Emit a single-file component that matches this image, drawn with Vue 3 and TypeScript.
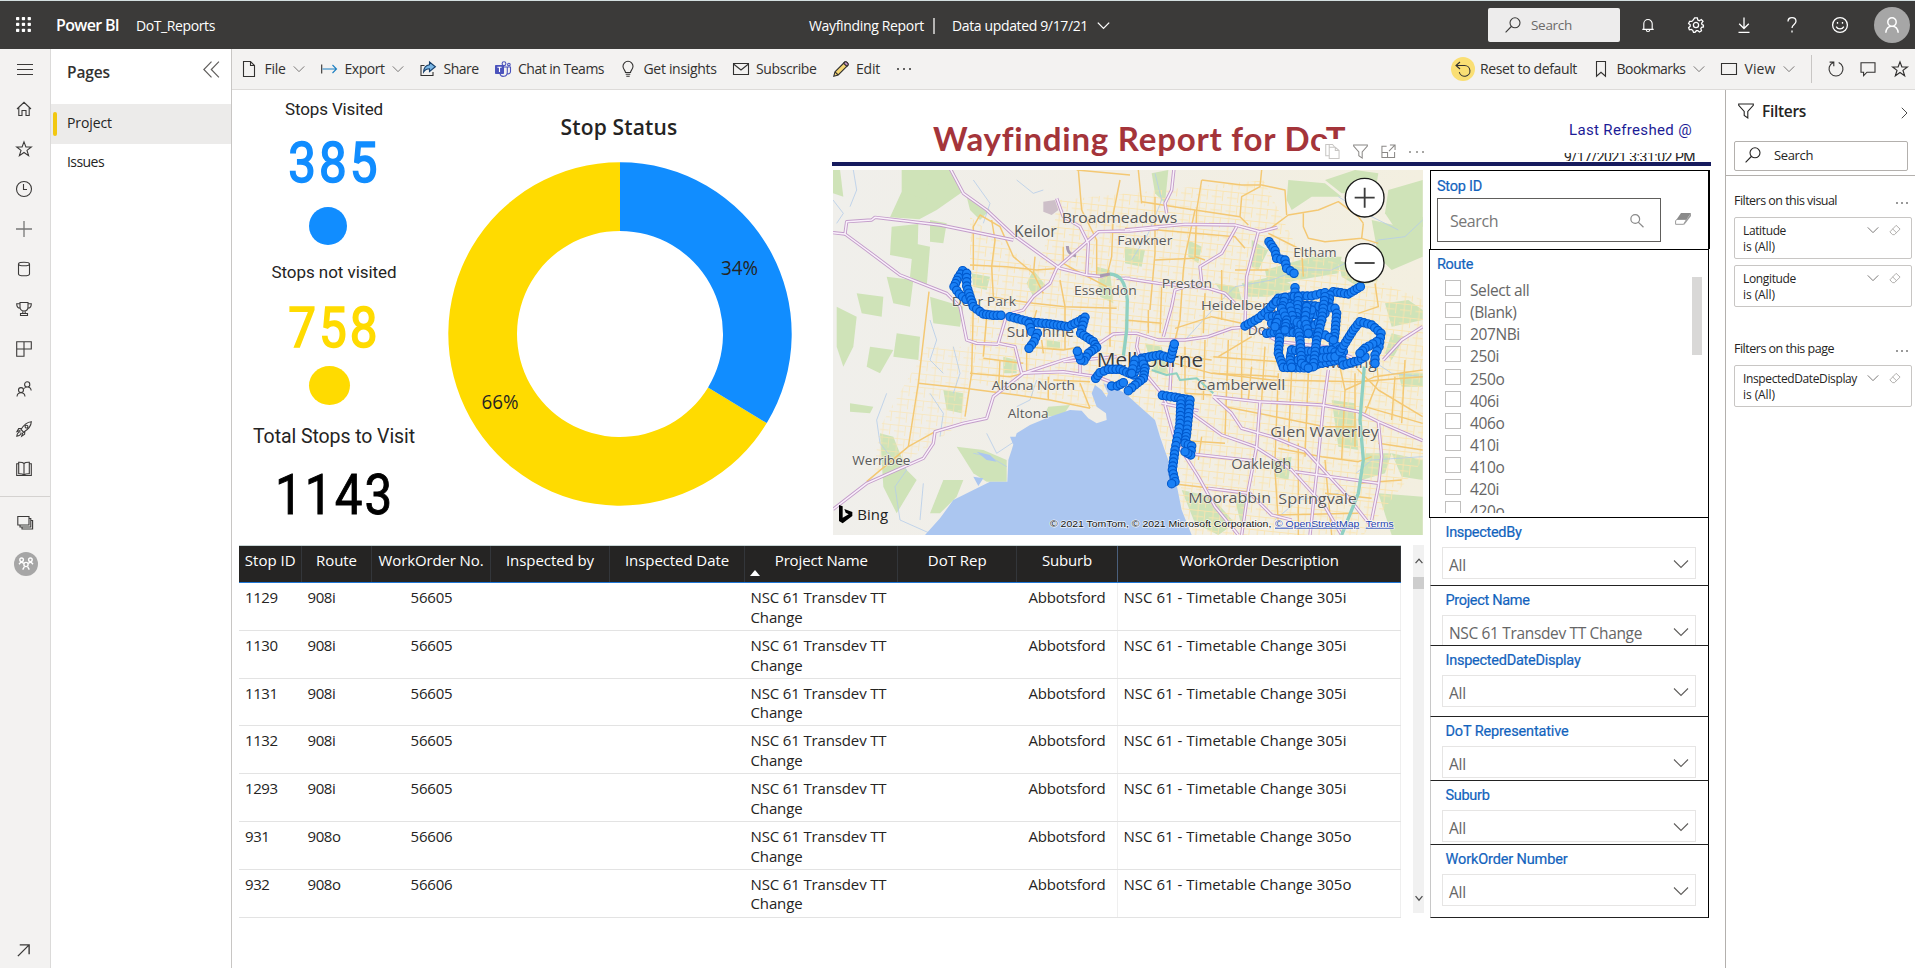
<script setup lang="ts">
import type { Directive } from 'vue'

/* Adjusts tracking so that a label fills the given width in pixels. */
const vFit: Directive<HTMLElement, number> = {
  mounted(el, { value }) {
    const count = (el.textContent ?? '').trim().length
    if (!value || !count) return
    el.style.letterSpacing = '0px'
    const natural = el.getBoundingClientRect().width
    const scale = el.offsetWidth ? natural / el.offsetWidth : 1
    const squeeze = scale < 0.97 ? 0.88 : 1
    el.style.letterSpacing = `${((value - natural) / squeeze / count).toFixed(3)}px`
  },
}

const icons: Record<string, string> = {
  menu: 'M0 2.5H16M0 7.5H16M0 12.5H16',
  home: 'M1 8 8 1.3 15 8M2.8 6.5V14.5H6V9.5H10V14.5H13.2V6.5',
  star: 'M8 .9 9.9 6H15.3L11 9.4 12.6 14.7 8 11.5 3.4 14.7 5 9.4.7 6H6.1Z',
  clock: 'M8 .5A7.5 7.5 0 1 0 8 15.5 7.5 7.5 0 1 0 8 .5M7.5 3V8.5H11',
  plus: 'M0 8H16M8 0V16',
  db: 'M2.5 3C2.5.6 13.5.6 13.5 3S2.5 5.4 2.5 3V13C2.5 15.4 13.5 15.4 13.5 13V3',
  trophy: 'M4 1.5H12V6C12 8.6 10.4 10 8 10S4 8.6 4 6ZM4 2.8H.7C.7 5.7 1.8 7.2 4.3 7.3M12 2.8H15.3C15.3 5.7 14.2 7.2 11.7 7.3M6.8 10V12.3M9.2 10V12.3M4.5 12.5H11.5V14.5H4.5Z',
  apps: 'M.7 .7H15.3V8H.7ZM8 .7V15.3H.7V8',
  people: 'M11.2 .8A2.6 2.6 0 1 0 11.2 6 2.6 2.6 0 1 0 11.2 .8M5 6.6A2.5 2.5 0 1 0 5 11.6 2.5 2.5 0 1 0 5 6.6M1 15.5C1.3 13 2.8 11.8 5 11.8S8.7 13 9 15.5M8 7.5C9 6.4 10 6 11.4 6 13.6 6 14.9 7.2 15.2 9.5',
  rocket: 'M5 8.5C8 3.5 11 1 15.3 .7 15.2 5 12.5 8.2 7.6 11.2ZM5.8 7.3 2.7 7.6 1 10.5 4.4 9.4M8.8 10.4 8.6 13.2 5.7 15.2 6.8 11.6M10.5 4.2A1.4 1.4 0 1 0 10.5 7 1.4 1.4 0 1 0 10.5 4.2M4.5 10.8C2.5 11 1 13 .8 15.3 3 15 4.8 13.8 5.3 11.7',
  book: 'M8 2.5C7 1.5 4.8 1.2 2.7 1.3V12.7C5 12.6 7 13 8 14 9 13 11 12.6 13.3 12.7V1.3C11.2 1.2 9 1.5 8 2.5V14M2.7 2.7H.7V14.5H15.3V2.7H13.3',
  layers: 'M.8 1.5H12V10H.8ZM12 3.5H13.8V12H3V10M13.8 5.5H15.6V14H5V12',
  expand: 'M2 14 14 2M4 2H14V12',
  chevron: 'M1 4.5 8 11.5 15 4.5',
  chevronRight: 'M5 1 12 8 5 15',
  collapse: 'M8 .5 .8 8 8 15.5M15 .5 7.8 8 15 15.5',
  file: 'M2.5 .5H9.5L13.5 4.5V15.5H2.5ZM9.5 .5V4.5H13.5',
  bulb: 'M5.5 11.5C5.5 9.5 3 8.5 3 5.3A5 5 0 0 1 13 5.3C13 8.5 10.5 9.5 10.5 11.5ZM5.7 13.3H10.3M6.3 15.3H9.7',
  mail: 'M.5 2.5H15.5V13.5H.5ZM.5 3 8 9 15.5 3',
  bookmark: 'M3.5 .5H12.5V15.2L8 11.3 3.5 15.2Z',
  view: 'M.5 2.5H15.5V13.5H.5Z',
  refresh: 'M5.3 1.5A7 7 0 1 0 10.7 1.5M5.8 5.2V1.1H1.6',
  reset: 'M5 1 1 4.5 5 8M1 4.5H9.5A5.4 5.4 0 1 1 4.3 11.2',
  comment: 'M1 1.8H15V11.2H7L3.6 14.6V11.2H1Z',
  search: 'M10 .8A5 5 0 1 0 10 10.8 5 5 0 1 0 10 .8M6.3 9.5 .6 15.3',
  searchRight: 'M6 .8A5 5 0 1 0 6 10.8 5 5 0 1 0 6 .8M9.7 9.5 15.4 15.2',
  bell: 'M1.5 12.5H14.5M3.2 12.5V6A4.8 4.8 0 0 1 12.8 6V12.5M6 12.8C6 15.6 10 15.6 10 12.8',
  gear: 'M6.7 .8H9.3L9.8 3 11.4 3.7 13.3 2.5 15 4.4 13.6 6.2 14 7.5 15.4 8.2V10L13.6 10.4 12.8 11.7 13.5 13.7 11.5 15 9.8 13.7H8.4L7 15.3H5.5L4.7 13.3 3.4 12.4 1.4 12.8 .6 10.7 2.2 9.2V7.8L.6 6.5 1.6 4.3 3.8 4.4 4.9 3.4ZM8 5.4A2.6 2.6 0 1 0 8 10.6 2.6 2.6 0 1 0 8 5.4',
  download: 'M8 .5V11.5M3.2 6.7 8 11.5 12.8 6.7M2.5 15.3H13.5',
  help: 'M4 4.5C4 2 5.7.7 8 .7S12 2 12 4.3C12 7.4 8 7.5 8 11M8 13.6V15.5',
  smile: 'M8 .6A7.4 7.4 0 1 0 8 15.4 7.4 7.4 0 1 0 8 .6M4.2 9.6C5.7 12.6 10.3 12.6 11.8 9.6M5.5 5V6.8M10.5 5V6.8',
  person: 'M8 .8A4.2 4.2 0 1 0 8 9.2 4.2 4.2 0 1 0 8 .8M1.8 15.8C2.2 11.5 4.6 9.2 8 9.2S13.8 11.5 14.2 15.8',
  funnel: 'M.7 1H15.3V2.3L9.8 8.5V15L6.2 12.5V8.5L.7 2.3Z',
  copy: 'M4.5 3.5V.5H.8V12.5H4.5M4.5 3.5H11L15 7V15.5H4.5ZM11 3.5V7H15M4.5 .5H8L10.5 3.5',
  focus: 'M6 2.5H1V14.5H14.5V8.5M1 9H7V14.5M9.5 1H15V6.5M15 1 8.5 7.5',
  eraser: 'M9.5 1.8 14.8 6.8 7.2 14.2H4.7L1.2 10.5ZM4.8 6.5 10 11.6',
}

interface ToolItem { icon: string; label: string; width: number; menu?: boolean }
const leftTools: ToolItem[] = [
  { icon: 'file', label: 'File', width: 21, menu: true },
  { icon: 'export', label: 'Export', width: 40, menu: true },
  { icon: 'share', label: 'Share', width: 35 },
  { icon: 'teams', label: 'Chat in Teams', width: 86 },
  { icon: 'bulb', label: 'Get insights', width: 73 },
  { icon: 'mail', label: 'Subscribe', width: 60.5 },
  { icon: 'pencil', label: 'Edit', width: 24 },
]
const rightTools: ToolItem[] = [
  { icon: 'bookmark', label: 'Bookmarks', width: 69, menu: true },
  { icon: 'view', label: 'View', width: 31, menu: true },
]
const railIcons = ['home', 'star', 'clock', 'plus', 'db', 'trophy', 'apps', 'people', 'rocket', 'book']
const headerIcons = ['bell', 'gear', 'download', 'help', 'smile']

const routes = ['Select all', '(Blank)', '207NBi', '250i', '250o', '406i', '406o', '410i', '410o', '420i', '420o']

interface Slicer { label: string; labelWidth: number; value: string; valueWidth: number; height: number }
const slicers: Slicer[] = [
  { label: 'InspectedBy', labelWidth: 76, value: 'All', valueWidth: 17, height: 68 },
  { label: 'Project Name', labelWidth: 84, value: 'NSC 61 Transdev TT Change', valueWidth: 193, height: 60 },
  { label: 'InspectedDateDisplay', labelWidth: 135, value: 'All', valueWidth: 17, height: 71 },
  { label: 'DoT Representative', labelWidth: 123, value: 'All', valueWidth: 17, height: 64 },
  { label: 'Suburb', labelWidth: 44, value: 'All', valueWidth: 17, height: 64 },
  { label: 'WorkOrder Number', labelWidth: 122, value: 'All', valueWidth: 17, height: 73 },
]

const columns = [
  { title: 'Stop ID', width: 51 },
  { title: 'Route', width: 41 },
  { title: 'WorkOrder No.', width: 105 },
  { title: 'Inspected by', width: 88 },
  { title: 'Inspected Date', width: 104 },
  { title: 'Project Name', width: 93 },
  { title: 'DoT Rep', width: 59 },
  { title: 'Suburb', width: 50 },
  { title: 'WorkOrder Description', width: 159 },
]
const rows = [
  ['1129', '908i', '56605', '305i'],
  ['1130', '908i', '56605', '305i'],
  ['1131', '908i', '56605', '305i'],
  ['1132', '908i', '56605', '305i'],
  ['1293', '908i', '56605', '305i'],
  ['931', '908o', '56606', '305o'],
  ['932', '908o', '56606', '305o'],
]

const filterGroups = [
  { title: 'Filters on this visual', width: 103, cards: [{ name: 'Latitude', width: 43 }, { name: 'Longitude', width: 53 }] },
  { title: 'Filters on this page', width: 100, cards: [{ name: 'InspectedDateDisplay', width: 114 }] },
]

/* Donut: 385 visited out of 1143. */
const visitedAngle = (385 / 1143) * Math.PI * 2
function arc(from: number, to: number, outer: number, inner: number): string {
  const p = (a: number, r: number) => `${(Math.sin(a) * r).toFixed(2)} ${(-Math.cos(a) * r).toFixed(2)}`
  const large = to - from > Math.PI ? 1 : 0
  return `M${p(from, outer)}A${outer} ${outer} 0 ${large} 1 ${p(to, outer)}L${p(to, inner)}A${inner} ${inner} 0 ${large} 0 ${p(from, inner)}Z`
}
const visitedPath = arc(0, visitedAngle, 171.7, 103)
const remainingPath = arc(visitedAngle, Math.PI * 2, 171.7, 103)

/* Map drawing units are a third of a pixel. East-side features are shifted by 885. */
const westMotorways = [
  '360,25 400,100 470,150 550,225 640,290 690,325 770,345 820,350',
  '9,218 45,222 50,185 125,180 135,172 330,195 550,240',
  '45,222 110,270 210,345 350,400 390,440 410,540 440,550 505,553',
  '985,205 900,213 805,215 760,255 680,325 660,370 610,410 580,450 530,465 505,550 555,560 575,640',
  '9,1048 110,970 200,930 280,895 310,850 315,815 400,790 470,775 490,710 580,640 700,600 760,585 800,555 850,522 885,520',
  '575,640 700,635 800,650 840,665', '700,605 860,590', '750,600 750,640', '680,115 700,170 750,200 775,250 770,345',
  '860,355 900,355',
]
const eastMotorways = [
  '0,210 100,200 180,193 330,195 405,215 457,202', '147,25 140,90 120,130 125,160',
  '335,200 290,280 225,320 230,365 150,390 140,440 115,530', '400,215 365,350 360,490',
  '0,355 100,370 250,385 300,400 330,430', '0,520 35,520 100,540 180,540 250,530 320,505 380,500 460,545 600,560 700,600',
  '40,530 35,560 60,640 110,700 125,735', '775,600 830,540 893,500', '265,710 400,725 590,735 700,755 760,785 893,842',
  '265,710 320,760 350,805 440,830 540,870 660,1000 740,1100', '180,745 290,825 390,860 500,930 600,1040 650,1125',
  '120,735 150,840 220,950 270,1040 340,1125', '405,725 395,860 370,990 350,1125', '610,630 595,740 575,940 555,1125',
  '760,785 770,890 760,980 740,1080', '210,883 390,903', '510,935 760,970', '110,730 220,752', '140,590 135,690',
  '370,995 440,1065 500,1080', '250,985 370,1000',
]
const westRoads = [
  '420,315 530,320 620,330 690,325', '430,330 430,200 450,165 510,200 550,290 610,340 640,400', '485,180 495,240 485,320 490,410',
  '430,440 425,640 405,770', '297,395 265,670 235,860', '265,670 405,685 560,705 660,720 780,745', '110,965 235,860 315,815',
  '420,640 540,650 580,640', '470,470 460,590', '460,595 580,610', '590,560 590,640', '635,540 640,580', '480,410 610,430 705,440 860,445',
  '690,360 705,440 705,570', '745,30 755,150 800,240 800,350', '870,60 850,160 845,290 830,350', '740,30 900,45',
  '585,560 700,570 750,560', '750,670 780,745', '655,650 655,720', '510,600 505,700', '620,450 600,520', '610,345 615,290',
  '700,260 700,310 735,330 830,380', '670,660 780,665', '840,420 840,560',
]
const eastRoads = [
  '40,30 50,130', '90,110 90,280 75,450', '210,150 180,290 175,330', '230,60 215,150 210,290 240,300', '230,60 350,75 410,75 480,90 485,165',
  '410,30 405,80 350,110 345,170', '50,125 210,150 345,170 370,195', '430,210 490,165 580,150 640,125 700,170 715,190',
  '535,160 535,200 550,235 600,245 710,235 715,190', '710,235 760,250', '0,205 100,210 330,230 360,265', '330,330 430,330', '430,220 530,270 535,350',
  '70,450 70,520', '110,380 105,520', '175,330 165,480 150,540', '0,480 110,490', '150,505 260,470 350,490', '240,400 235,520', '290,330 290,480',
  '150,610 260,640 460,650', '180,560 180,700', '240,540 235,720', '310,540 300,830', '350,500 350,720', '265,590 460,605', '280,590 380,530',
  '265,640 440,660 700,665 893,650', '420,560 410,720', '460,640 450,900', '500,630 490,860', '550,640 540,890', '640,600 660,690 650,900',
  '690,640 690,860', '700,460 760,440 750,370', '660,590 760,690 893,770', '750,560 760,660 720,760', '720,740 893,790', '300,740 600,800 690,800',
  '460,865 590,890 700,905 740,890', '450,930 460,1090', '130,970 260,985 370,995', '520,850 520,1125', '600,900 620,1125', '700,970 830,960',
  '810,650 800,780', '450,1065 700,1060', '840,600 830,790', '200,760 190,860', '150,840 300,850', '230,830 220,900', '760,850 893,870', '90,300 210,295',
  '380,620 370,720', '100,580 260,600', '180,700 260,705', '600,1000 740,1015', '660,690 750,650 893,630',
]
const water = 'M285 1125 330 1075 370 1020 430 990 480 965 532 965 535 900 545 870 560 820 600 795 660 770 720 750 755 752 775 775 800 790 830 780 828 760 800 740 785 700 795 675 815 690 830 712 834 700 820 670 850 680 885 700 935 745 975 780 990 830 1020 915 1042 985 1055 1050 1085 1125Z'
const westParks = [
  '215,28 368,28 398,95 320,150 268,178 180,172 215,95', '185,200 265,192 262,300 180,285', '225,28 300,28 290,120 220,95',
  '80,400 160,410 155,470 95,460', '20,440 80,470 70,560 40,620 20,560', '300,180 350,190 340,250 300,245', '200,520 270,530 265,600 190,590',
  '120,560 190,570 150,640 110,620', '340,690 400,700 395,760 350,750', '170,350 250,360 240,440 190,430', '300,410 400,440 390,500 310,490',
  '380,860 460,870 530,900 530,965 470,965 430,940', '150,820 190,830 230,930 260,960 200,1060 160,980', '340,960 400,960 380,1010 330,1060 300,1060',
  '610,330 650,380 610,410 590,370', '520,590 560,600 560,640 520,640', '655,740 720,735 700,765 640,770', '410,110 480,150 450,180 420,150',
  '800,320 840,330 850,430 810,410', '650,540 690,545 690,570 650,565', '60,730 130,740 120,760 60,755', '9,28 30,28 40,110 9,100',
  '250,250 300,260 290,380 240,350', '425,340 480,350 470,390 430,380',
]
const eastParks = [
  '490,60 600,70 650,110 560,110 500,150 485,120', '600,60 690,30 760,40 750,100 650,100', '790,90 893,60 893,200 820,220 780,160',
  '420,330 560,290 650,290 640,340 520,360 430,380', '740,180 830,200 893,170 893,290 800,330 760,290', '350,370 440,350 520,380 430,410 370,410',
  '80,40 130,30 120,130 90,100', '190,240 230,260 220,310 190,290', '380,240 430,270 400,330 380,320', '640,300 720,330 760,360 700,380 650,350',
  '720,880 800,880 780,940 710,960', '760,1000 893,1010 893,1125 800,1125', '60,550 110,560 130,640 90,640', '800,880 893,900 893,960 830,950',
  '620,720 690,730 700,870 640,860', '440,900 500,890 490,960 450,950', '820,640 893,640 893,680 830,680', '170,990 260,1010 330,1090 280,1125 210,1090',
  '780,430 850,420 893,450 893,480 800,500', '0,260 60,270 50,320 0,310', '330,1020 370,1020 350,1100', '800,520 840,530 800,600 780,580', '270,370 340,380 350,420 300,410',
]
const creeks = [
  '9,120 40,160 20,190', '70,30 80,90 60,140', '300,480 320,540 300,600 340,640', '300,700 340,760 330,830', '370,560 390,640 370,700',
  '170,700 140,780 150,850 190,900 230,930 195,980 210,1080 300,1120', '430,60 480,130 460,190', '560,60 610,100 640,90', '280,970 270,1080',
  '470,820 500,880 560,840', '430,880 480,890 530,920', '620,660 600,720 560,740',
]
const eastCreeks = [
  '893,180 840,230 760,240 700,290 620,330 520,330 440,360 330,380 290,420 180,540', '90,40 110,120 70,220 20,300', '893,650 800,640 740,600',
  '693,940 740,900 893,890', '450,1080 520,1020 640,1000', '640,110 720,160 820,210',
]

interface MapLabel { text: string; x: number; y: number; w: number; size: number; strong?: boolean }
const mapLabels: MapLabel[] = [
  { text: 'Keilor', x: 552, y: 232, w: 128, size: 47 },
  { text: 'Broadmeadows', x: 695, y: 189, w: 347, size: 45 },
  { text: 'Fawkner', x: 862, y: 255, w: 165, size: 40 },
  { text: 'Deer Park', x: 365, y: 438, w: 193, size: 40 },
  { text: 'Essendon', x: 732, y: 405, w: 188, size: 39 },
  { text: 'Sunshine', x: 530, y: 530, w: 202, size: 44 },
  { text: 'Melbourne', x: 800, y: 622, w: 320, size: 59, strong: true },
  { text: 'Altona North', x: 485, y: 690, w: 250, size: 39 },
  { text: 'Altona', x: 533, y: 773, w: 123, size: 39 },
  { text: 'Werribee', x: 67, y: 914, w: 174, size: 39 },
  { text: 'Preston', x: 995, y: 384, w: 151, size: 39 },
  { text: 'Eltham', x: 1390, y: 290, w: 130, size: 38 },
  { text: 'Heidelberg', x: 1113, y: 451, w: 225, size: 39 },
  { text: 'Doncaster', x: 1253, y: 525, w: 200, size: 41 },
  { text: 'Nunawading', x: 1365, y: 624, w: 275, size: 44 },
  { text: 'Camberwell', x: 1100, y: 691, w: 266, size: 44 },
  { text: 'Glen Waverley', x: 1321, y: 831, w: 325, size: 46 },
  { text: 'Oakleigh', x: 1204, y: 927, w: 180, size: 41 },
  { text: 'Moorabbin', x: 1075, y: 1028, w: 248, size: 46 },
  { text: 'Springvale', x: 1345, y: 1033, w: 236, size: 46 },
]

type Line = [number, number][]
const westStops: Line[] = [
  [[398, 332], [385, 352], [372, 380], [388, 402], [408, 418]],
  [[410, 340], [410, 378], [420, 410], [430, 440], [460, 462], [490, 466], [513, 466]],
  [[540, 470], [600, 486], [660, 492], [715, 500], [745, 485], [765, 472], [752, 520], [790, 545], [800, 562], [775, 580], [762, 602], [752, 600], [742, 574]],
  [[597, 490], [605, 515], [622, 520], [612, 545], [597, 565]],
  [[797, 655], [810, 638], [835, 628], [870, 628], [910, 645], [935, 595], [990, 585], [1022, 595], [1033, 552]],
  [[845, 678], [862, 678], [880, 668]],
  [[935, 600], [945, 625], [940, 655], [915, 675], [895, 692]],
  [[915, 600], [905, 640]],
]
const eastStops: Line[] = [
  [[432, 245], [450, 272], [455, 295], [480, 300], [485, 325], [507, 340]],
  [[510, 383], [510, 410]],
  [[625, 395], [670, 402], [706, 380]],
  [[360, 498], [400, 475], [430, 450], [460, 415], [520, 408], [560, 408], [600, 398], [615, 405], [610, 440]],
  [[455, 425], [520, 435], [570, 438], [630, 445], [635, 460], [630, 520], [625, 550], [655, 575]],
  [[430, 470], [480, 465], [560, 465], [600, 460]],
  [[440, 490], [500, 490], [570, 495], [590, 480]],
  [[425, 520], [470, 515], [540, 520], [600, 525], [625, 540]],
  [[465, 520], [460, 580], [475, 622], [550, 624], [580, 612], [640, 600]],
  [[500, 570], [495, 600], [500, 622]],
  [[500, 570], [560, 575], [620, 570], [650, 590], [655, 615], [700, 602], [720, 590]],
  [[520, 600], [580, 595], [630, 590]],
  [[600, 410], [590, 480], [575, 540], [565, 620]],
  [[520, 410], [515, 470], [525, 540], [530, 610], [550, 624]],
  [[480, 412], [470, 450], [450, 500]],
  [[495, 440], [505, 480], [540, 500], [560, 450]],
  [[470, 445], [485, 480], [480, 510]],
  [[545, 440], [540, 480], [550, 520]],
  [[645, 575], [668, 537], [685, 510], [705, 485], [740, 495], [768, 520], [762, 560], [750, 585], [750, 610]],
  [[755, 545], [720, 565], [705, 580]],
  [[112, 706], [150, 712], [195, 720], [190, 770], [185, 820], [180, 850], [200, 858], [197, 885], [180, 875]],
  [[168, 720], [165, 790], [158, 830], [150, 870], [142, 930], [150, 965], [140, 971]],
]
function sample(line: Line, step: number): Line {
  const out: Line = [line[0]]
  for (let i = 1; i < line.length; i++) {
    const [ax, ay] = line[i - 1]
    const [bx, by] = line[i]
    const n = Math.max(1, Math.round(Math.hypot(bx - ax, by - ay) / step))
    for (let k = 1; k <= n; k++) out.push([ax + ((bx - ax) * k) / n, ay + ((by - ay) * k) / n])
  }
  return out
}
const stops: Line = [
  ...westStops.flatMap((l) => sample(l, 12)),
  ...eastStops.flatMap((l) => sample(l.map(([x, y]) => [x + 885, y] as [number, number]), 12)),
]
</script>

<template>
  <div class="app">
    <header class="topbar">
      <div class="brand">
        <svg class="waffle" viewBox="0 0 16 16">
          <template v-for="r in 3" :key="r">
            <rect v-for="c in 3" :key="c" :x="(c - 1) * 6" :y="(r - 1) * 6" width="3.4" height="3.4" rx=".8" />
          </template>
        </svg>
        <strong v-fit="63">Power BI</strong>
        <span v-fit="79" class="workspace">DoT_Reports</span>
      </div>
      <div class="doc">
        <span v-fit="115">Wayfinding Report</span>
        <i class="bar"></i>
        <span v-fit="136">Data updated 9/17/21</span>
        <svg class="ic chev" viewBox="0 0 16 16"><path :d="icons.chevron" /></svg>
      </div>
      <div class="tools">
        <div class="top-search">
          <svg class="ic" viewBox="0 0 16 16"><path :d="icons.search" /></svg>
          <span v-fit="41">Search</span>
        </div>
        <span v-for="name in headerIcons" :key="name" class="top-icon">
          <svg class="ic" viewBox="0 0 16 16"><path :d="icons[name]" /></svg>
        </span>
        <span class="avatar"><svg class="ic" viewBox="0 0 16 16"><path :d="icons.person" /></svg></span>
      </div>
    </header>

    <div class="body">
      <nav class="rail">
        <span class="rail-item"><svg class="ic" viewBox="0 0 16 16"><path :d="icons.menu" /></svg></span>
        <span v-for="name in railIcons" :key="name" class="rail-item">
          <svg class="ic" viewBox="0 0 16 16"><path :d="icons[name]" /></svg>
        </span>
        <span class="rail-item layers"><svg class="ic" viewBox="0 0 16 16"><path :d="icons.layers" /></svg></span>
        <span class="rail-item">
          <svg class="group" viewBox="0 0 24 24">
            <circle cx="12" cy="12" r="12" fill="#a6a6a6" />
            <g fill="none" stroke="#fff" stroke-width="1.4">
              <circle cx="7.6" cy="7.8" r="1.8" /><circle cx="16.4" cy="7.8" r="1.8" /><circle cx="12" cy="12.5" r="2.1" />
              <path d="M5 12.3 7 10 10 11.3M19 12.3 17 10 14 11.3M8.7 17.6 10.3 14.8M15.3 17.6 13.7 14.8" />
            </g>
          </svg>
        </span>
        <span class="rail-item last"><svg class="ic" viewBox="0 0 16 16"><path :d="icons.expand" /></svg></span>
      </nav>

      <aside class="pages">
        <div class="pages-head">
          <span v-fit="43">Pages</span>
          <svg class="ic" viewBox="0 0 16 16"><path :d="icons.collapse" /></svg>
        </div>
        <div class="page active"><span v-fit="45">Project</span></div>
        <div class="page"><span v-fit="37">Issues</span></div>
      </aside>

      <div class="main">
        <div class="toolbar">
          <div v-for="t in leftTools" :key="t.label" class="tool">
            <svg v-if="t.icon === 'export'" class="ic" viewBox="0 0 16 16">
              <path d="M.7 3.5V12.5" /><path d="M1.5 8H15.5M11.5 4 15.5 8 11.5 12" stroke="#1b7fc1" />
            </svg>
            <svg v-else-if="t.icon === 'share'" class="ic" viewBox="0 0 16 16">
              <path d="M4.5 4.5H1V14.5H13V11" />
              <path d="M9.5 1 15.4 5.8 9.5 10.5V7.8C6.5 7.8 5 8.8 3.6 11 3.8 7 6 4.2 9.5 3.8Z" fill="#7ab7e6" stroke="#17406b" />
            </svg>
            <svg v-else-if="t.icon === 'teams'" class="ic" viewBox="0 0 16 16">
              <circle cx="9" cy="2.7" r="1.9" stroke="#4b53bc" /><circle cx="13.9" cy="3.6" r="1.3" stroke="#4b53bc" />
              <path d="M9 6H15.5V10.5C15.5 12.5 13.5 13.3 12.4 12.7M12.3 6V11C12.3 16.5 5.5 16.5 5 12.5" stroke="#4b53bc" />
              <rect x="0" y="4" width="9" height="9" rx=".8" fill="#4b53bc" stroke="none" />
              <path d="M2.4 6.3H6.6M4.5 6.3V11" stroke="#fff" />
            </svg>
            <svg v-else-if="t.icon === 'pencil'" class="ic" viewBox="0 0 16 16">
              <path d="M.8 15.2 2 10.8 11.8 1C13.2 0 16 2.8 15 4.2L5.2 14Z" fill="#f7d774" />
              <path d="M10.6 2.2 11.8 1C13.2 0 16 2.8 15 4.2L13.8 5.4Z" fill="#c08fc0" />
              <path d="M2 10.8 5.2 14" />
            </svg>
            <svg v-else class="ic" viewBox="0 0 16 16"><path :d="icons[t.icon]" /></svg>
            <span v-fit="t.width">{{ t.label }}</span>
            <svg v-if="t.menu" class="ic chev" viewBox="0 0 16 16"><path :d="icons.chevron" /></svg>
          </div>
          <span class="dots"><i></i><i></i><i></i></span>
          <div class="tool reset">
            <span class="halo"><svg class="ic" viewBox="0 0 16 16"><path :d="icons.reset" /></svg></span>
            <span v-fit="97">Reset to default</span>
          </div>
          <div v-for="t in rightTools" :key="t.label" class="tool">
            <svg class="ic" viewBox="0 0 16 16"><path :d="icons[t.icon]" /></svg>
            <span v-fit="t.width">{{ t.label }}</span>
            <svg class="ic chev" viewBox="0 0 16 16"><path :d="icons.chevron" /></svg>
          </div>
          <i class="sep"></i>
          <svg class="ic lone" viewBox="0 0 16 16"><path :d="icons.refresh" /></svg>
          <svg class="ic lone" viewBox="0 0 16 16"><path :d="icons.comment" /></svg>
          <svg class="ic lone" viewBox="0 0 16 16"><path :d="icons.star" /></svg>
        </div>

        <div class="content">
          <section class="report">
            <div class="kpis">
              <div class="kpi-label k1"><span v-fit="98">Stops Visited</span></div>
              <div class="kpi-num n1"><span v-fit="94">385</span></div>
              <div class="kpi-dot d1"><i></i></div>
              <div class="kpi-label k2"><span v-fit="125">Stops not visited</span></div>
              <div class="kpi-num n2"><span v-fit="94">758</span></div>
              <div class="kpi-dot d2"><i></i></div>
              <div class="kpi-label k3"><span v-fit="162">Total Stops to Visit</span></div>
              <div class="kpi-num n3"><span v-fit="121">1143</span></div>
            </div>

            <div class="donut">
              <h2><span v-fit="117">Stop Status</span></h2>
              <svg viewBox="-172 -172 344 344" width="344" height="344">
                <path :d="remainingPath" fill="#ffdb00" /><path :d="visitedPath" fill="#118dff" />
                <text x="101" y="-59" textLength="37" lengthAdjust="spacingAndGlyphs">34%</text>
                <text x="-138.5" y="75" textLength="37" lengthAdjust="spacingAndGlyphs">66%</text>
              </svg>
            </div>

            <div class="title-row">
              <h1><span v-fit="413">Wayfinding Report for DoT</span></h1>
              <div class="refreshed">
                <span v-fit="123" class="ref-label">Last Refreshed @</span>
                <div class="ref-time"><span v-fit="131">9/17/2021 3:31:02 PM</span></div>
              </div>
              <div class="visual-tools">
                <svg class="ic faint" viewBox="0 0 16 16"><path :d="icons.copy" /></svg>
                <svg class="ic" viewBox="0 0 16 16"><path :d="icons.funnel" /></svg>
                <svg class="ic" viewBox="0 0 16 16"><path :d="icons.focus" /></svg>
                <span class="dots"><i></i><i></i><i></i></span>
              </div>
            </div>

            <div class="map">
              <svg viewBox="9 30 1770 1095" width="590" height="365">
                <defs>
                  <pattern id="streets" width="46" height="40" patternUnits="userSpaceOnUse" patternTransform="rotate(6)">
                    <path d="M0 10H46M12 0V40M0 28H30M33 10V40" fill="none" stroke="#fbe3ad" stroke-width="2.6" />
                  </pattern>
                  <linearGradient id="land" x1="0" x2="1">
                    <stop offset="0" stop-color="#f0efeb" /><stop offset=".45" stop-color="#f1eee6" /><stop offset="1" stop-color="#f3efe0" />
                  </linearGradient>
                </defs>
                <rect x="9" y="30" width="1770" height="1095" fill="url(#land)" />
                <g fill="#cfe3b8">
                  <polygon v-for="p in westParks" :key="p" :points="p" />
                  <polygon v-for="p in eastParks" :key="p" :points="p" transform="translate(885 0)" />
                </g>
                <polygon points="420,170 620,330 690,120 1300,60 1400,260 1779,420 1779,900 1600,1125 1080,1125 980,780 780,740 540,700 420,660" fill="url(#streets)" />
                <polygon points="290,560 420,560 410,780 250,890 130,940 150,800" fill="url(#streets)" opacity=".7" />
                <g class="creek">
                  <polyline v-for="p in creeks" :key="p" :points="p" />
                  <polyline v-for="p in eastCreeks" :key="p" :points="p" transform="translate(885 0)" />
                </g>
                <path :d="water" fill="#abc6f0" />
                <path d="M440 875 480 885 500 905 470 900ZM430 950 460 955 445 978ZM540 830 560 830 550 855Z" fill="#abc6f0" />
                <g class="road">
                  <polyline v-for="p in westRoads" :key="p" :points="p" />
                  <polyline v-for="p in eastRoads" :key="p" :points="p" transform="translate(885 0)" />
                </g>
                <path d="M640 125 675 120 685 150 665 165 640 155Z" fill="#cdbfc8" />
                <path d="M712 258C712 280 725 285 738 288" class="tunnel" />
                <g class="mway">
                  <polyline v-for="p in westMotorways" :key="p" :points="p" />
                  <polyline v-for="p in eastMotorways" :key="p" :points="p" transform="translate(885 0)" />
                </g>
                <g class="mway-in">
                  <polyline v-for="p in westMotorways" :key="p" :points="p" />
                  <polyline v-for="p in eastMotorways" :key="p" :points="p" transform="translate(885 0)" />
                </g>
                <path class="tunnel" d="M810 348 840 342" />
                <g class="toll">
                  <path d="M840 342C870 345 885 360 892 420L890 510 880 590" />
                  <path d="M1603 620 1590 780 1600 900 1585 1000 1535 1125" />
                  <path d="M965 630 1010 645 1040 640 1050 660 1100 655 1150 700" stroke-width="6" />
                </g>
                <g class="place">
                  <text v-for="l in mapLabels" :key="l.text" :x="l.x" :y="l.y" :font-size="l.size" :textLength="l.w" lengthAdjust="spacingAndGlyphs" :class="{ strong: l.strong }">{{ l.text }}</text>
                </g>
                <g class="stops">
                  <circle v-for="(s, i) in stops" :key="i" :cx="s[0]" :cy="s[1]" r="12.5" />
                </g>
                <path d="M27 1035 38 1039V1073L56 1063 47 1058 43 1047 67 1056V1068L38 1090 27 1083Z" fill="#000" />
                <text x="82" y="1080" font-size="46" textLength="92" lengthAdjust="spacingAndGlyphs" class="bing">Bing</text>
                <g class="legal">
                  <text x="660" y="1100" textLength="664" lengthAdjust="spacingAndGlyphs">© 2021 TomTom, © 2021 Microsoft Corporation,</text>
                  <text x="1335" y="1100" textLength="253" lengthAdjust="spacingAndGlyphs" class="link">© OpenStreetMap</text>
                  <text x="1607" y="1100" textLength="84" lengthAdjust="spacingAndGlyphs" class="link">Terms</text>
                </g>
                <g class="zoom">
                  <circle cx="1604" cy="113" r="58" /><path d="M1574 113H1634M1604 83V143" />
                  <circle cx="1604" cy="309" r="58" /><path d="M1574 309H1634" />
                </g>
              </svg>
            </div>

            <div class="slicers">
              <div class="stop-id">
                <span v-fit="45" class="slicer-label">Stop ID</span>
                <div class="stop-row">
                  <div class="stop-search">
                    <span v-fit="48">Search</span>
                    <svg class="ic" viewBox="0 0 16 16"><path :d="icons.searchRight" /></svg>
                  </div>
                  <svg class="erase" viewBox="0 0 16 12"><path d="M6 0H16L11.5 6.5H1.5Z" fill="#8a8a8a" /><path d="M1.5 6.5H11.5L8.6 11.3H.6V8Z" fill="#fff" stroke="#9a9a9a" /><path d="M11.5 6.5 16 0V3L9.5 11.5H8.6Z" fill="#9a9a9a" /></svg>
                </div>
              </div>
              <div class="route">
                <span v-fit="36" class="slicer-label">Route</span>
                <div class="route-body">
                  <ul>
                    <li v-for="r in routes" :key="r"><i></i><span>{{ r }}</span></li>
                  </ul>
                  <i class="thumb"></i>
                </div>
              </div>
              <div v-for="s in slicers" :key="s.label" class="slicer" :style="{ height: s.height + 'px' }">
                <span v-fit="s.labelWidth" class="slicer-label">{{ s.label }}</span>
                <div class="drop">
                  <span v-fit="s.valueWidth">{{ s.value }}</span>
                  <svg class="ic" viewBox="0 0 16 16"><path :d="icons.chevron" /></svg>
                </div>
              </div>
            </div>

            <div class="table-wrap">
              <div class="grid">
                <div class="tr head">
                  <div v-for="c in columns" :key="c.title" class="th">
                    <i v-if="c.title === 'Project Name'" class="sort"></i>
                    <span v-fit="c.width">{{ c.title }}</span>
                  </div>
                </div>
                <div v-for="r in rows" :key="r[0]" class="tr">
                  <div class="td"><span>{{ r[0] }}</span></div>
                  <div class="td"><span>{{ r[1] }}</span></div>
                  <div class="td mid"><span v-fit="42">{{ r[2] }}</span></div>
                  <div class="td"></div>
                  <div class="td"></div>
                  <div class="td"><span v-fit="136">NSC 61 Transdev TT</span><span v-fit="52">Change</span></div>
                  <div class="td"></div>
                  <div class="td suburb"><span v-fit="77">Abbotsford</span></div>
                  <div class="td"><span v-fit="r[3] === '305i' ? 223 : 228">NSC 61 - Timetable Change {{ r[3] }}</span></div>
                </div>
              </div>
              <div class="scroll">
                <svg class="ic" viewBox="0 0 16 16"><path d="M2.5 11.5 8 5 13.5 11.5" /></svg>
                <i></i>
                <svg class="ic down" viewBox="0 0 16 16"><path d="M2.5 5 8 11.5 13.5 5" /></svg>
              </div>
            </div>
          </section>

          <aside class="filters">
            <div class="f-top">
              <div class="f-head">
                <svg class="ic" viewBox="0 0 16 16"><path :d="icons.funnel" /></svg>
                <strong v-fit="44">Filters</strong>
                <svg class="ic close" viewBox="0 0 16 16"><path :d="icons.chevronRight" /></svg>
              </div>
              <div class="f-search">
                <svg class="ic" viewBox="0 0 16 16"><path :d="icons.search" /></svg>
                <span v-fit="39">Search</span>
              </div>
            </div>
            <div v-for="g in filterGroups" :key="g.title" class="f-group">
              <div class="f-title"><span v-fit="g.width">{{ g.title }}</span><span class="dots"><i></i><i></i><i></i></span></div>
              <div v-for="c in g.cards" :key="c.name" class="f-card">
                <div class="f-text"><span v-fit="c.width">{{ c.name }}</span><span v-fit="32">is (All)</span></div>
                <svg class="ic f-chev" viewBox="0 0 16 16"><path :d="icons.chevron" /></svg>
                <svg class="ic f-erase" viewBox="0 0 16 16"><path :d="icons.eraser" /></svg>
              </div>
            </div>
          </aside>
        </div>
      </div>
    </div>
  </div>
</template>

<style>
html, body { margin: 0; overflow: hidden; background: #fff; }
</style>

<style scoped>
* { box-sizing: border-box; }
.app { width: 1915px; height: 968px; display: flex; flex-direction: column; overflow: hidden; font: 14px "Open Sans", "Noto Sans", sans-serif; color: #252423; background: #fff; }
.app span, .app strong { white-space: nowrap; flex: none; }
i { font-style: normal; display: block; }
.ic { width: 16px; height: 16px; flex: none; fill: none; stroke: currentColor; stroke-width: 1.1; overflow: visible; display: block; }
.ic.chev { width: 12px; height: 12px; }
.dots { display: flex; gap: 4px; }
.dots i { width: 2px; height: 2px; background: currentColor; border-radius: 1px; }

.topbar { height: 49px; flex: none; display: flex; align-items: center; background: #3b3a39; border-top: 1px solid #d3dfe0; color: #fff; font-size: 14px; }
.brand { width: 809px; display: flex; align-items: center; padding-left: 16px; }
.waffle { width: 15.5px; height: 15.5px; fill: #fff; margin-right: 24.5px; }
.brand strong { font-size: 16px; font-weight: 600; }
.workspace { margin-left: 17px; }
.doc { display: flex; align-items: center; }
.bar { width: 2px; height: 16px; background: #b5b4b3; margin: 1px 17px 0 9px; }
.doc .chev { margin-left: 9px; width: 13px; height: 13px; stroke-width: 1.6; }
.tools { margin-left: auto; display: flex; align-items: center; padding-right: 5px; }
.top-search { width: 132px; height: 34px; background: #edecec; border-radius: 2px; display: flex; align-items: center; gap: 10px; padding-left: 17px; margin-right: 4px; color: #6b6a69; font-size: 13.5px; }
.top-search .ic { color: #3b3a39; }
.top-icon { width: 48px; display: flex; justify-content: center; }
.top-icon .ic { stroke-width: 1.3; }
.top-icon:first-of-type .ic { width: 14px; height: 15px; }
.avatar { width: 36px; height: 36px; margin-left: 10px; border-radius: 50%; background: #a6a6a6; display: flex; align-items: center; justify-content: center; }
.avatar .ic { stroke-width: 1.5; }

.body { flex: 1; display: flex; min-height: 0; }
.rail { width: 51px; flex: none; background: #f3f2f1; border-right: 1px solid #dbdad9; display: flex; flex-direction: column; color: #3b3a39; }
.rail-item { height: 40px; display: flex; align-items: center; padding-left: 16px; }
.rail-item:first-child { padding-left: 17px; height: 41px; }
.rail-item:not(:first-child) .ic { margin-top: -2px; }
.rail-item:nth-child(5) .ic { stroke-width: 1.3; color: #777; }
.rail-item.layers { border-top: 1px solid #d4d2d0; margin-top: 6px; height: 54px; padding-left: 17px; }
.rail-item .group { width: 24px; height: 24px; margin-left: -2px; margin-top: -12px; }
.rail-item.last { margin-top: auto; height: 36px; }
.rail-item.last .ic { stroke-width: 1.5; width: 15px; height: 15px; margin-top: 0; }

.pages { width: 181px; flex: none; border-right: 1px solid #c8c6c4; }
.pages-head { height: 55px; display: flex; justify-content: space-between; padding: 12px 11px 0 16px; font-size: 15.5px; font-weight: 600; color: #323130; }
.pages-head .ic { margin-top: 0; color: #605e5c; width: 17px; height: 17px; }
.page { height: 40px; display: flex; align-items: center; padding: 0 0 3px 16px; font-size: 14px; margin-bottom: -2px; }
.page + .page { margin-top: 1px; }
.page.active { background: #ecebea; position: relative; }
.page.active::before { content: ""; position: absolute; left: 2px; top: 8px; width: 4px; height: 24px; border-radius: 2px; background: #f2c811; }

.main { flex: 1; display: flex; flex-direction: column; min-width: 0; }
.toolbar { height: 41px; flex: none; background: #f3f2f1; border-bottom: 1px solid #dddbd9; display: flex; align-items: center; padding: 0 7px 1px 9px; gap: 16px; font-size: 14px; color: #323130; }
.tool { display: flex; align-items: center; }
.tool > span:not(.halo) { margin-left: 7.5px; }
.tool .chev { margin-left: 7.5px; color: #605e5c; }
.tool.reset { margin-left: auto; }
.tool.reset > span:not(.halo) { margin-left: 5px; }
.halo { width: 24px; height: 24px; border-radius: 50%; background: #fadf74; display: flex; align-items: center; justify-content: center; }
.sep { width: 1px; height: 28px; background: #c8c6c4; }
.toolbar > .dots { margin-left: 1px; }
.lone:last-child { stroke-width: 1.2; }

.content { flex: 1; display: flex; min-height: 0; }
.report { flex: 1; display: grid; grid-template-columns: 204px 396px 597px 1fr; grid-template-rows: 80px 375px 1fr; }
.kpis { grid-column: 1; grid-row: 1 / 3; display: flex; flex-direction: column; font-family: Roboto, sans-serif; }
.kpis > div { display: flex; align-items: center; justify-content: center; }
.kpi-label { font-size: 17px; }
.k1 { height: 39px; padding-bottom: 2px; } .k2 { height: 36px; padding-bottom: 3px; } .k3 { height: 60px; font-size: 19.5px; padding-bottom: 1px; }
.kpi-num { font-size: 56px; line-height: 1; }
.kpi-num span { transform: scaleX(0.88); padding-left: 2px; -webkit-text-stroke: 0.9px currentColor; }
.n1 { height: 67px; color: #118dff; padding: 1px 2px 0 0; } .n2 { height: 74px; color: #ffdb00; padding: 0 2px 0 0; } .n3 { height: 56px; color: #000; }
.n1 span, .n2 span { -webkit-text-stroke-width: 1.6px; }
.d1 { height: 59px; padding-right: 12px; } .d1 i { width: 38px; height: 38px; border-radius: 50%; background: #118dff; }
.d2 { height: 42px; padding: 0 9px 1px 0; } .d2 i { width: 41px; height: 39px; border-radius: 50%; background: #ffdb00; }

.donut { grid-column: 2; grid-row: 1 / 3; display: flex; flex-direction: column; align-items: center; }
.donut h2 { margin: 0; height: 72px; line-height: 74px; font-size: 21px; font-weight: 600; padding-right: 30px; }
.donut svg { display: block; margin-right: 28px; }
.donut text { font-size: 19.5px; fill: #252423; }

.title-row { grid-column: 3 / 5; grid-row: 1; height: 76px; width: 879px; position: relative; display: flex; border-bottom: 4px solid #161b5e; }
.title-row h1 { margin: 0 0 0 101px; width: 636px; font: 700 33px/50px Lato, "Open Sans", sans-serif; padding-top: 23px; color: #a4343a; }
.refreshed { font: 15px/18px Roboto, sans-serif; color: #1c1c96; padding-top: 31px; display: flex; flex-direction: column; }
.ref-label { align-self: flex-start; }
.ref-time { height: 8px; margin: 14px 0 0 -5px; overflow: hidden; color: #252423; line-height: 9px; font-size: 14px; }
.ref-time span { display: inline-block; }
.visual-tools { position: absolute; left: 488px; top: 49px; width: 112px; height: 23px; padding: 5px 0 0 5px; display: flex; gap: 13px; background: #fff; color: #8a8886; }
.visual-tools .faint { color: #c8c6c4; }
.visual-tools .ic { width: 15px; height: 15px; }
.visual-tools .dots { margin-top: 7px; gap: 4.5px; }

.map { grid-column: 3; grid-row: 2; padding-left: 1px; }
.map svg { display: block; }
.map polyline, .map .toll, .tunnel { fill: none; stroke-linejoin: round; }
.creek { stroke: #b5cdea; stroke-width: 2.4; }
.road { stroke: #f4c873; stroke-width: 4.4; }
.mway { stroke: #c39dca; stroke-width: 10; }
.mway-in { stroke: #faf0fb; stroke-width: 4.5; }
.toll { stroke: #8fd0c2; stroke-width: 10; }
.tunnel { stroke: #a99ab0; stroke-width: 9; }
.place { font-family: "Open Sans", sans-serif; fill: #5a5a5a; stroke: rgba(246, 244, 239, 0.8); stroke-width: 4; paint-order: stroke; stroke-linejoin: round; }
.place .strong { fill: #3c3c3c; }
.stops { fill: #1a80f5; stroke: #0058cc; stroke-width: 3.4; }
.bing { fill: #222; font-family: "Open Sans", sans-serif; }
.legal { font: 29px "Liberation Sans", Arial, sans-serif; fill: #111; stroke: rgba(255, 255, 255, 0.8); stroke-width: 4; paint-order: stroke; }
.legal .link { fill: #1c3fae; text-decoration: underline; }
.zoom { fill: #fff; stroke: #1a1a1a; stroke-width: 4; }
.zoom path { stroke: #3c3c3c; stroke-width: 5.5; }

.slicers { grid-column: 4; grid-row: 2 / 4; width: 280px; }
.slicer-label { font: 400 14.5px/16px Roboto, sans-serif; color: #1263bd; display: inline-block; -webkit-text-stroke: 0.2px #1263bd; }
.stop-id { width: 280px; height: 79px; margin-left: 1px; border: 1px solid #000; border-right-width: 2px; border-bottom: 0; padding: 5px 0 0 6px; }
.stop-row { display: flex; align-items: center; margin-top: 3px; }
.stop-search { width: 224px; height: 44px; border: 1px solid #605e5c; display: flex; align-items: center; justify-content: space-between; padding: 2px 16px 0 12px; font-size: 16px; color: #777; }
.stop-search .ic { width: 14px; height: 14px; margin-top: -1px; color: #8a8a8a; stroke-width: 1.4; }
.erase { width: 16px; height: 12px; margin-left: 14px; margin-top: -3px; }
.route { height: 269px; border: 1px solid #000; width: 280px; padding: 7px 0 0 7px; }
.route .slicer-label { display: block; width: max-content; }
.route-body { display: flex; justify-content: space-between; margin-top: 4px; height: 236px; overflow: hidden; padding-right: 6px; }
.route ul { list-style: none; margin: 0; padding: 0 0 0 8px; color: #666; font-size: 15.5px; }
.route li { display: flex; height: 22.15px; padding-top: 3px; gap: 9px; line-height: 21px; }
.route li i { width: 16px; height: 16px; border: 1px solid #c0bfbe; flex: none; }
.route li span { letter-spacing: -0.4px; }
.thumb { width: 10px; height: 78px; background: #d9d8d7; }
.slicer { width: 279px; margin-left: 1px; border-left: 1px solid #c8c8c8; border-right: 1px solid #000; border-bottom: 1px solid #222; padding: 7px 0 0 11px; overflow: hidden; }
.slicer .slicer-label { display: block; width: max-content; margin-left: 3.5px; }
.drop { width: 254px; height: 32px; margin-top: 6px; border: 1px solid #e6e5e4; display: flex; align-items: center; justify-content: space-between; padding: 4px 6px 0 6px; font-size: 15.5px; color: #666; }
.drop .ic { margin-top: -3px; color: #605e5c; }

.table-wrap { grid-column: 1 / 4; grid-row: 3; display: flex; margin-left: 7px; }
.grid { width: 1162px; font-size: 15px; }
.tr { display: grid; grid-template-columns: 62.5px 70px 119px 119px 135px 153.5px 118.5px 101px 1fr; height: 47.8px; border-bottom: 1px solid #e3e3e3; }
.tr.head { height: 38px; background: #252423; color: #fff; border-top: 1px solid #c9d6d6; border-bottom: 1px solid #1f77d6; }
.th { display: flex; justify-content: center; line-height: 29px; padding-left: 1px; border-right: 1px solid #33363a; position: relative; }
.th:nth-child(8) { border-right-color: #4a5f7c; }
.sort { position: absolute; left: 5.5px; bottom: 6px; border: solid transparent; border-width: 0 5.5px 6px; border-bottom-color: #fff; }
.td { padding: 5px 0 0 6px; line-height: 19.7px; display: flex; flex-direction: column; align-items: flex-start; border-right: 1px solid transparent; }
.td > span { letter-spacing: -0.4px; }
.td:nth-child(8), .td:nth-child(9) { border-right-color: #efefef; }
.td.mid { align-items: center; padding-left: 2px; }
.td.suburb { padding-left: 12px; }
.scroll { width: 11px; height: 368px; background: #f1f1f1; margin-left: 12px; display: flex; flex-direction: column; align-items: center; color: #505050; }
.scroll .ic { width: 10px; height: 10px; margin-top: 11px; stroke-width: 2; }
.scroll i { width: 11px; height: 12px; background: #cdcdcd; margin-top: 11px; }
.scroll .down { margin: auto 0 10px; }

.filters { width: 190px; flex: none; border-left: 1px solid #b3b0ad; }
.f-top { height: 86px; border-bottom: 1px solid #b3b0ad; padding-left: 8px; }
.f-head { display: flex; align-items: center; height: 42px; padding-left: 4px; }
.f-head strong { font-size: 15.5px; font-weight: 600; margin-left: 8px; }
.f-head .close { margin-left: auto; width: 12px; height: 12px; margin-right: 5px; margin-top: 3px; }
.f-search { margin-top: 9px; width: 174px; height: 30px; border: 1px solid #b3b0ad; border-radius: 2px; display: flex; align-items: center; padding: 0 0 2px 10px; gap: 13px; font-size: 13px; }
.f-group { padding: 14px 3px 0 8px; margin-bottom: 17px; }
.f-title { height: 20px; margin-bottom: 7px; display: flex; justify-content: space-between; align-items: center; font-size: 12.5px; }
.f-title .dots { gap: 3px; margin-right: 4px; margin-top: 6px; color: #777; }
.f-card { height: 42px; border: 1px solid #c8c6c4; border-radius: 2px; display: flex; padding: 5px 10px 0 8px; margin-bottom: 6px; font-size: 12px; line-height: 16px; }
.f-text { display: flex; flex-direction: column; align-items: flex-start; width: 124px; }
.f-chev { width: 12px; height: 12px; color: #605e5c; margin-top: 1px; }
.f-erase { width: 12px; height: 12px; color: #a19f9d; margin: 1px 0 0 auto; }
</style>
